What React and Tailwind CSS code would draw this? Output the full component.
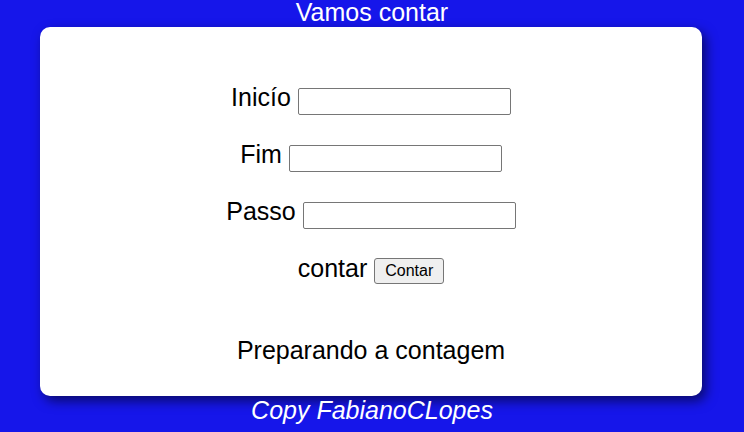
import React from "react";

const Campo = ({ label }) => (
  <div className="flex items-start justify-center gap-[7px] h-[28px]">
    <span className="leading-[28px]">{label}</span>
    <input
      type="text"
      className="mt-[5px] w-[213px] h-[27px] border border-[#767676] rounded-[2px] bg-white px-[2px] text-[13.33px]"
    />
  </div>
);

const App = () => {
  return (
    <div
      className="min-h-[432px] bg-[#1616ea] text-[25px] flex flex-col"
      style={{ fontFamily: '"Liberation Sans", Arial, sans-serif' }}
    >
      <header className="h-[27px] leading-[24px] text-white text-center w-full">
        Vamos contar
      </header>

      <section className="ml-[40px] w-[662px] h-[369px] bg-white rounded-[10px] shadow-[4px_5px_12px_rgba(0,0,0,0.55)] pt-[56px] flex flex-col items-center text-black">
        <div className="flex flex-col gap-[29px]">
          <Campo label="Inicío" />
          <Campo label="Fim" />
          <Campo label="Passo" />
          <div className="flex items-start justify-center gap-[7px] h-[28px]">
            <span className="leading-[28px]">contar</span>
            <button className="mt-[4px] h-[26px] px-[10px] text-[16px] leading-[18px] bg-[#efefef] border border-[#767676] rounded-[3px]">
              Contar
            </button>
          </div>
        </div>
        <p className="mt-[54px] leading-[28px]">Preparando a contagem</p>
      </section>

      <footer className="leading-[28px] italic text-white text-center w-full">
        Copy FabianoCLopes
      </footer>
    </div>
  );
};

export default App;
